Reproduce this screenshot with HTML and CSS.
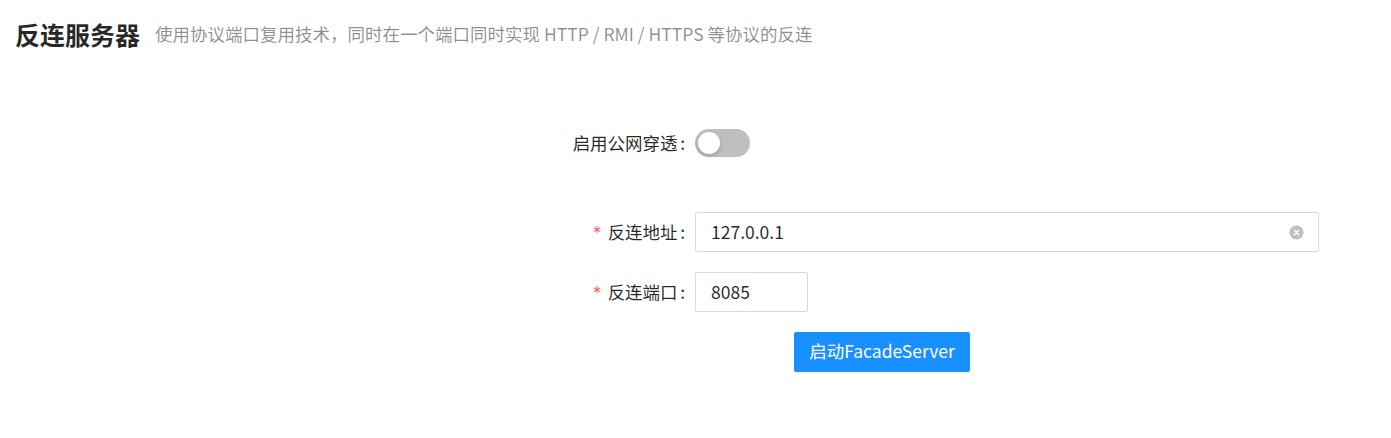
FILE: index.html
```html
<!DOCTYPE html>
<html lang="zh-CN">
<head>
<meta charset="utf-8">
<title>反连服务器</title>
<link rel="stylesheet" href="styles.css">
</head>
<body>
<div class="page">
  <div class="header">
    <span class="title">反连服务器</span>
    <span class="subtitle">使用协议端口复用技术，同时在一个端口同时实现 HTTP / RMI / HTTPS 等协议的反连</span>
  </div>
  <form class="form">
    <div class="row row-switch">
      <label class="label">启用公网穿透</label>
      <div class="control">
        <button type="button" class="switch"><span class="knob"></span></button>
      </div>
    </div>
    <div class="row">
      <label class="label required">反连地址</label>
      <div class="control">
        <div class="input input-wide">
          <span class="value">127.0.0.1</span>
          <span class="clear">
            <svg width="15" height="15" viewBox="0 0 15 15"><circle cx="7.5" cy="7.5" r="7" fill="#bfbfbf"/><path d="M5.3 5.3 L9.7 9.7 M9.7 5.3 L5.3 9.7" stroke="#fff" stroke-width="1.4" stroke-linecap="round"/></svg>
          </span>
        </div>
      </div>
    </div>
    <div class="row">
      <label class="label required">反连端口</label>
      <div class="control">
        <div class="input input-narrow"><span class="value">8085</span></div>
      </div>
    </div>
    <div class="row">
      <div class="label"></div>
      <div class="control">
        <button type="button" class="btn-primary">启动FacadeServer</button>
      </div>
    </div>
  </form>
</div>
</body>
</html>
```

FILE: styles.css
```css
* { box-sizing: border-box; }
html, body {
  margin: 0;
  padding: 0;
  background: #fff;
}
body {
  font-family: "Noto Sans CJK SC", "Noto Sans", sans-serif;
  font-size: 17.5px;
  color: rgba(0, 0, 0, 0.85);
  width: 1391px;
  height: 438px;
  overflow: hidden;
}
.header {
  padding: 16px 15px 0 15px;
  height: 52px;
  display: flex;
  align-items: center;
  line-height: 36px;
}
.title {
  font-size: 25px;
  font-weight: 700;
  color: rgba(0, 0, 0, 0.85);
  margin-right: 15px;
}
.subtitle {
  font-size: 17.5px;
  color: rgba(0, 0, 0, 0.45);
}
.form {
  display: flex;
  flex-direction: column;
  gap: 20px;
  padding-top: 71px;
}
.row {
  display: grid;
  grid-template-columns: 695px 624px;
  align-items: center;
  height: 40px;
}
.row-switch {
  margin-bottom: 29px;
}
.label {
  font-size: 17.5px;
  text-align: right;
  white-space: nowrap;
  color: rgba(0, 0, 0, 0.85);
  position: relative;
  top: -1px;
}
.label::after {
  content: ":";
  margin: 0 10px 0 2.5px;
}
.label:empty::after { content: none; }
.required::before {
  content: "*";
  color: #ff4d4f;
  font-family: "DejaVu Sans", sans-serif;
  font-size: 15px;
  margin-right: 7px;
  position: relative;
  top: -1px;
}
.control {
  display: flex;
  align-items: center;
}
.switch {
  position: relative;
  width: 55px;
  height: 27.5px;
  border: none;
  border-radius: 14px;
  background: #bfbfbf;
  padding: 0;
  cursor: pointer;
}
.knob {
  position: absolute;
  top: 2.5px;
  left: 2.5px;
  width: 22.5px;
  height: 22.5px;
  border-radius: 50%;
  background: #fff;
  box-shadow: 0 2px 4px rgba(0, 35, 11, 0.2);
}
.input {
  height: 40px;
  border: 1px solid #d9d9d9;
  border-radius: 2px;
  display: flex;
  align-items: center;
  padding: 0 14px 0 15px;
  font-size: 17.5px;
  color: rgba(0, 0, 0, 0.85);
  background: #fff;
}
.value {
  position: relative;
  top: -1px;
}
.input-wide { width: 624px; justify-content: space-between; }
.input-narrow { width: 113px; }
.clear {
  display: flex;
  align-items: center;
}
.btn-primary {
  margin-left: 99px;
  height: 40px;
  width: 176px;
  border: 1px solid #1890ff;
  background: #1890ff;
  color: #fff;
  font-family: "Noto Sans CJK SC", "Noto Sans", sans-serif;
  font-size: 17.5px;
  line-height: 1;
  white-space: nowrap;
  border-radius: 2px;
  padding: 0 0 2px 0;
  box-shadow: 0 2px 0 rgba(0, 0, 0, 0.045);
  cursor: pointer;
}
```
